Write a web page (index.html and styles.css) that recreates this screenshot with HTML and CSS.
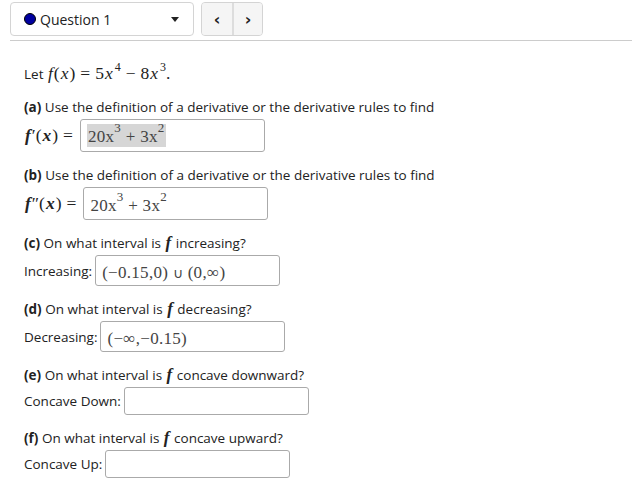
FILE: index.html
```html
<!DOCTYPE html>
<html lang="en">
<head>
    <meta charset="UTF-8">
    <title>Question 1</title>
    <meta name="viewport" content="width=device-width,initial-scale=1">
    <link rel="stylesheet" href="styles.css">
</head>
<body>
    <div class="top-bar">
        <div class="question-select">
            <span class="status-dot"></span>
            <span class="select-label">Question 1</span>
            <span class="caret"></span>
        </div>
        <div class="nav-group">
            <button class="nav-btn">&lsaquo;</button>
            <button class="nav-btn">&rsaquo;</button>
        </div>
    </div>

    <div class="question">
        <p class="intro">Let <span class="math"><i>f</i>(<i>x</i>)<span class="op">=</span>5<i>x</i><sup>4</sup><span class="op">&minus;</span>8<i>x</i><sup>3</sup>.</span></p>

        <div class="part">
            <p><b>(a)</b> Use the definition of a derivative or the derivative rules to find</p>
            <div class="answer-row">
                <span class="math lhs"><i>f</i>&prime;(<i>x</i>)<span class="op">=</span></span>
                <span class="answer tall"><span class="entry selected">20x<sup>3</sup> + 3x<sup>2</sup></span></span>
            </div>
        </div>

        <div class="part">
            <p><b>(b)</b> Use the definition of a derivative or the derivative rules to find</p>
            <div class="answer-row">
                <span class="math lhs"><i>f</i>&Prime;(<i>x</i>)<span class="op">=</span></span>
                <span class="answer tall"><span class="entry">20x<sup>3</sup> + 3x<sup>2</sup></span></span>
            </div>
        </div>

        <div class="part">
            <p><b>(c)</b> On what interval is <i class="fn">f</i> increasing?</p>
            <div class="answer-row">
                <span class="label">Increasing:</span>
                <span class="answer mid"><span class="entry">(&minus;0.15,0) <span class="cup">&cup;</span> (0,&infin;)</span></span>
            </div>
        </div>

        <div class="part">
            <p><b>(d)</b> On what interval is <i class="fn">f</i> decreasing?</p>
            <div class="answer-row">
                <span class="label">Decreasing:</span>
                <span class="answer mid"><span class="entry">(&minus;&infin;,&minus;0.15)</span></span>
            </div>
        </div>

        <div class="part">
            <p><b>(e)</b> On what interval is <i class="fn">f</i> concave downward?</p>
            <div class="answer-row">
                <span class="label">Concave Down:</span>
                <span class="answer"></span>
            </div>
        </div>

        <div class="part">
            <p><b>(f)</b> On what interval is <i class="fn">f</i> concave upward?</p>
            <div class="answer-row">
                <span class="label">Concave Up:</span>
                <span class="answer"></span>
            </div>
        </div>
    </div>
</body>
</html>
```

FILE: styles.css
```css
* {
    margin: 0;
    padding: 0;
    box-sizing: border-box;
}

body {
    font-family: 'Open Sans', Arial, sans-serif;
    font-size: 13.5px;
    color: #222;
    background: #fff;
}

/* Header */
.top-bar {
    display: flex;
    align-items: center;
    gap: 7px;
    margin-left: 10px;
    padding: 2px 0 4px;
    border-bottom: 1px solid #ccc;
}

.question-select {
    width: 184px;
    height: 34px;
    border: 1px solid #d4d4d4;
    border-radius: 4px;
    display: flex;
    align-items: center;
    padding: 0 14px 0 13px;
    background: #fff;
}

.status-dot {
    width: 12px;
    height: 12px;
    border-radius: 50%;
    background: #0000a0;
    border: 1px solid #000;
    margin-right: 4px;
}

.select-label {
    flex: 1;
    font-size: 14px;
    color: #222;
}

.caret {
    width: 0;
    height: 0;
    border-left: 4px solid transparent;
    border-right: 4px solid transparent;
    border-top: 5px solid #222;
}

.nav-group {
    display: flex;
    height: 34px;
    border: 1px solid #d4d4d4;
    border-radius: 4px;
    background: #f5f5f5;
    overflow: hidden;
}

.nav-btn {
    width: 30px;
    border: none;
    background: #f5f5f5;
    font-family: 'DejaVu Sans', sans-serif;
    font-size: 16px;
    font-weight: bold;
    color: #222;
}

.nav-btn + .nav-btn {
    border-left: 2px solid #ddd;
}

/* Question body */
.question {
    padding: 20px 24px 0;
}

.intro {
    line-height: 24px;
    margin-bottom: 11px;
}

.math {
    font-family: 'Liberation Serif', 'DejaVu Serif', serif;
    font-size: 17.5px;
}

.math i {
    font-style: italic;
    padding: 0 1px;
}

.op {
    margin: 0 5px;
}

.math sup {
    font-size: 12px;
    vertical-align: 8px;
    line-height: 0;
    margin-left: 1px;
}

.fn {
    font-family: 'Liberation Serif', serif;
    font-size: 17px;
    font-weight: bold;
    padding: 0 1px;
}

.part {
    margin-bottom: 13px;
}

.part p {
    line-height: 20px;
}

.answer-row {
    display: flex;
    align-items: center;
    margin-top: 2px;
}

.lhs {
    margin-right: 4px;
}

.lhs i {
    font-weight: bold;
}

.lhs .op {
    margin-right: 3px;
}

.label {
    margin-right: 3px;
}

.answer {
    display: flex;
    align-items: center;
    width: 185px;
    height: 28px;
    border: 1px solid #aaa;
    border-radius: 3px;
    padding: 0 6px;
    background: #fff;
}

.answer.tall {
    height: 33px;
}

.answer.mid {
    height: 31px;
}

.entry {
    font-family: 'Liberation Serif', 'DejaVu Serif', serif;
    font-size: 17px;
    color: #444;
    padding-top: 4px;
    letter-spacing: 0.3px;
}

.entry sup {
    font-size: 13px;
    vertical-align: 10px;
    line-height: 0;
}

.cup {
    font-family: 'Open Sans', sans-serif;
    font-size: 14px;
}

.entry.selected {
    background: #d6d6d6;
    padding: 3px 1px 0 1px;
}
```
